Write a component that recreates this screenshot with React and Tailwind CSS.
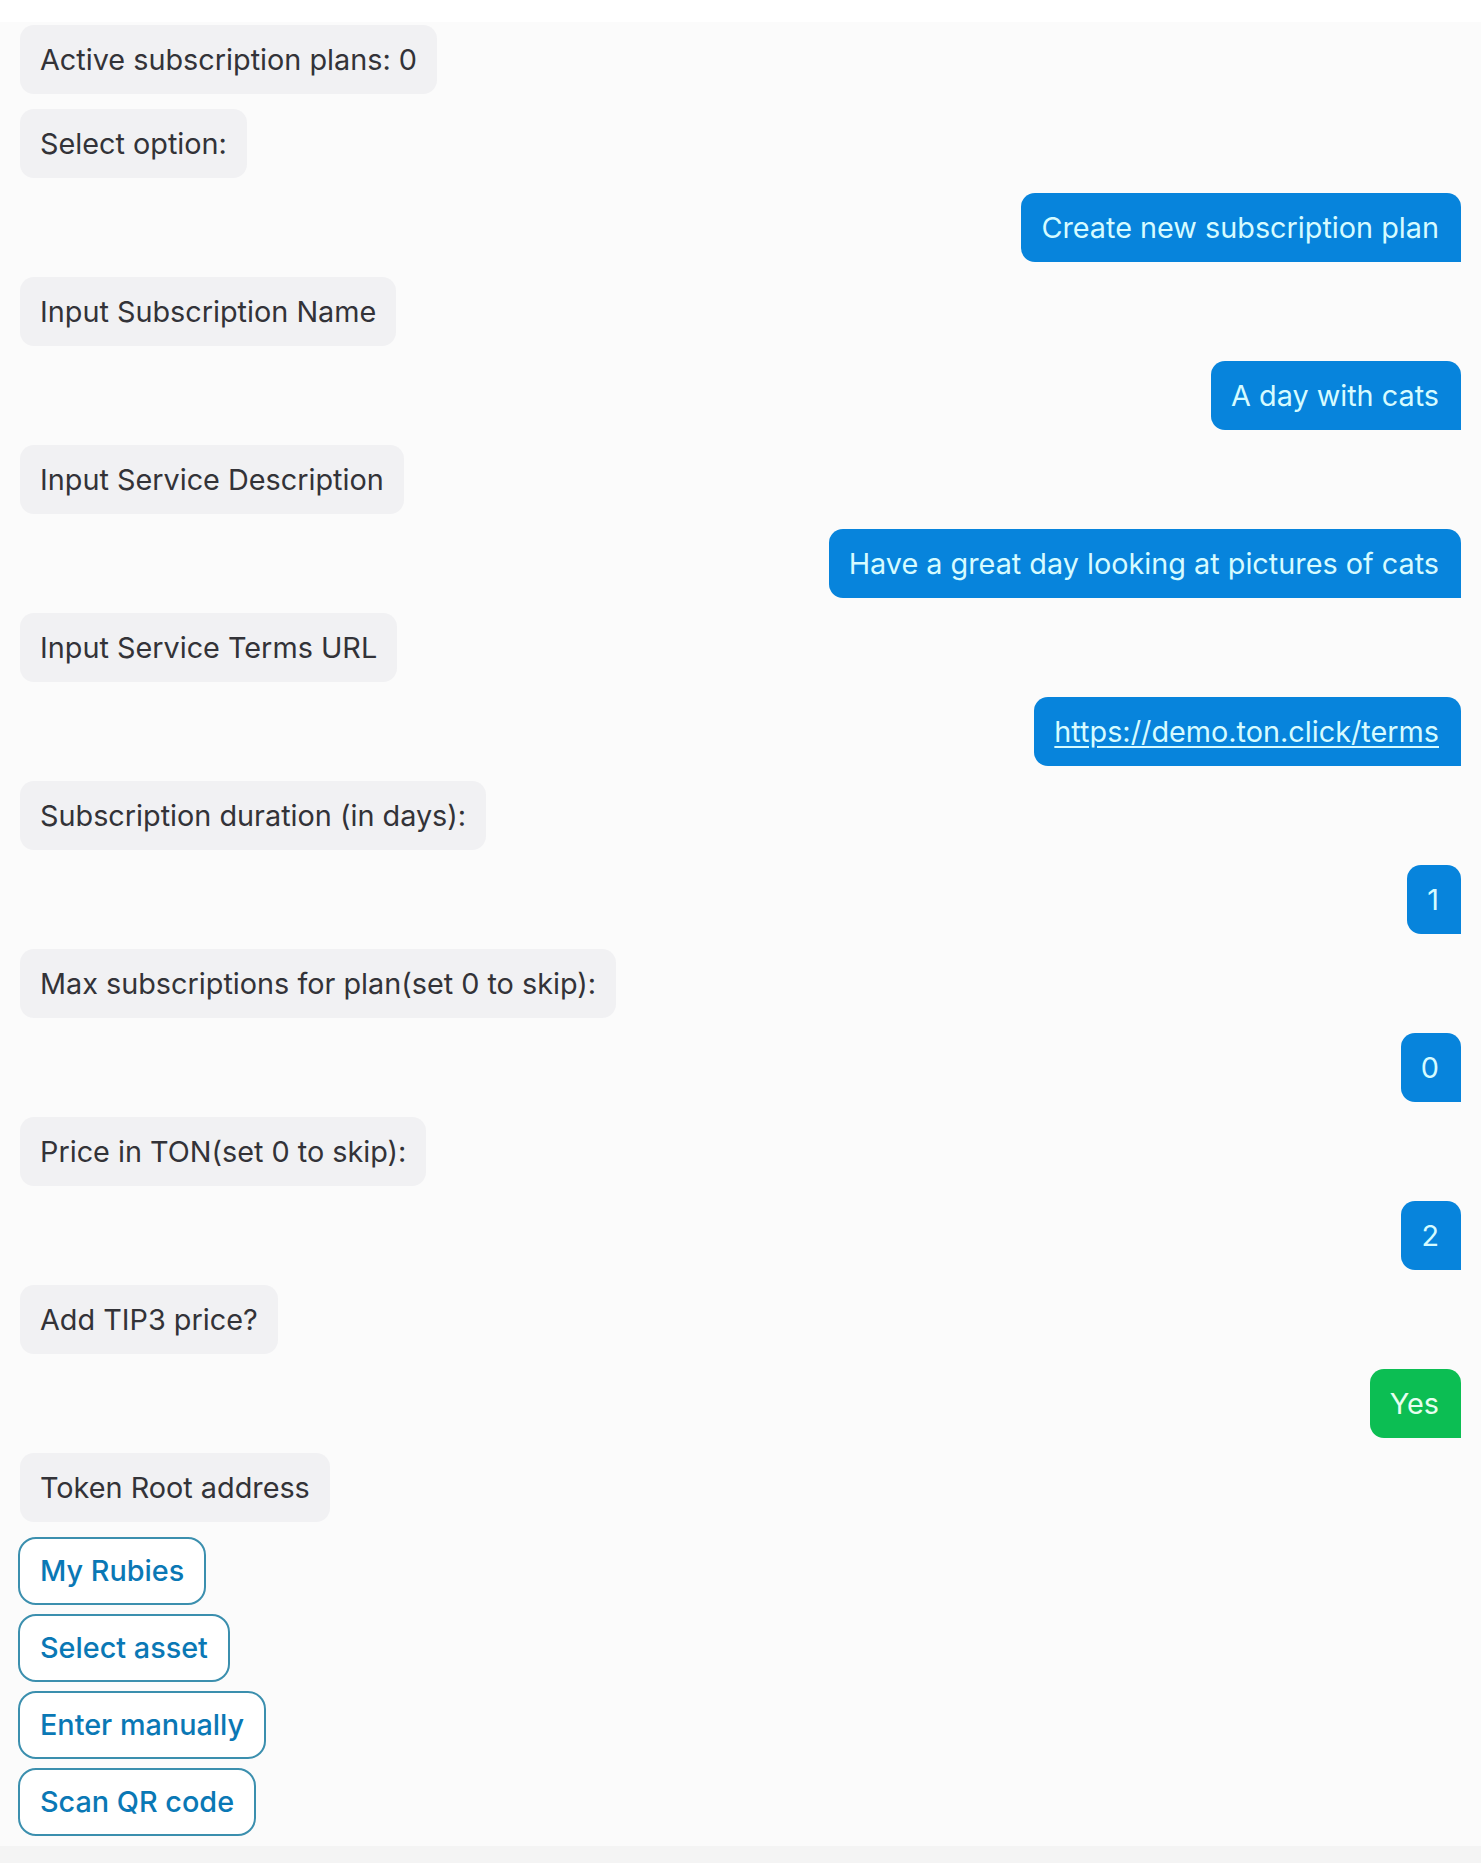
import React from "react";

const messages = [
  { side: "in", text: "Active subscription plans: 0" },
  { side: "in", text: "Select option:" },
  { side: "out", text: "Create new subscription plan" },
  { side: "in", text: "Input Subscription Name" },
  { side: "out", text: "A day with cats" },
  { side: "in", text: "Input Service Description" },
  { side: "out", text: "Have a great day looking at pictures of cats" },
  { side: "in", text: "Input Service Terms URL" },
  { side: "out", text: "https://demo.ton.click/terms", link: true },
  { side: "in", text: "Subscription duration (in days):" },
  { side: "out", text: "1" },
  { side: "in", text: "Max subscriptions for plan(set 0 to skip):" },
  { side: "out", text: "0" },
  { side: "in", text: "Price in TON(set 0 to skip):" },
  { side: "out", text: "2" },
  { side: "in", text: "Add TIP3 price?" },
  { side: "out", text: "Yes", green: true },
  { side: "in", text: "Token Root address" },
];

const options = ["My Rubies", "Select asset", "Enter manually", "Scan QR code"];

function Bubble({ msg }) {
  if (msg.side === "in") {
    return (
      <div className="flex justify-start">
        <div className="rounded-[14px] bg-[#f1f1f3] px-5 py-3 text-[28.8px] leading-[45px] text-[#333338]">
          {msg.text}
        </div>
      </div>
    );
  }
  return (
    <div className="flex justify-end">
      <div
        className={
          msg.green
            ? "rounded-[14px] rounded-br-none bg-[#0cbe53] py-3 pl-5 pr-[22px] text-[28.8px] leading-[45px] text-[#e6fff0]"
            : "rounded-[14px] rounded-br-none bg-[#0784dc] py-3 pl-5 pr-[22px] text-[28.8px] leading-[45px] text-[#d6fbff]"
        }
      >
        {msg.link ? <span className="underline underline-offset-4">{msg.text}</span> : msg.text}
      </div>
    </div>
  );
}

export default function App() {
  return (
    <div className="min-h-[1863px] bg-[#f4f4f4] font-['Inter',sans-serif]">
      <div className="h-[22px] bg-white" />
      <div className="flex flex-col gap-[15px] bg-[#fbfbfb] px-5 pt-[3px]">
        {messages.map((m, i) => (
          <Bubble key={i} msg={m} />
        ))}
        <div className="-ml-[2px] flex flex-col items-start gap-[9px] pb-[10px]">
          {options.map((o) => (
            <button
              key={o}
              className="h-[68px] rounded-[18px] border-2 border-[#3b8fae] bg-white px-[20px] text-[28.8px] font-medium text-[#0a78b5]"
            >
              {o}
            </button>
          ))}
        </div>
      </div>
    </div>
  );
}
